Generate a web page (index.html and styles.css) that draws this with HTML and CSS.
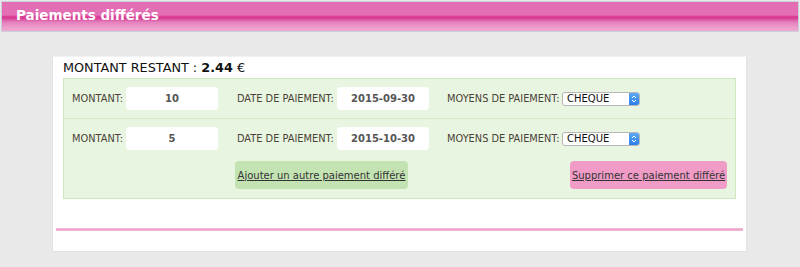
FILE: index.html
```html
<!DOCTYPE html>
<html lang="fr">
<head>
<meta charset="utf-8">
<title>Paiements différés</title>
<link rel="stylesheet" href="styles.css">
</head>
<body>
<div class="header"><h1 class="title">Paiements différés</h1></div>
<div class="panel">
  <div class="remaining">MONTANT RESTANT : <b>2.44</b> €</div>
  <div class="box">
    <div class="row">
      <span class="lbl l1">MONTANT:</span><span class="field">10</span>
      <span class="lbl l2">DATE DE PAIEMENT:</span><span class="field">2015-09-30</span>
      <span class="lbl l3">MOYENS DE PAIEMENT:</span>
      <span class="select"><span class="sel-text">CHEQUE</span><span class="stepper"><svg width="6" height="10" viewBox="0 0 6 10"><path d="M1 4 L3 2 L5 4 M1 6 L3 8 L5 6" fill="none" stroke="#fff" stroke-width="1"/></svg></span></span>
    </div>
    <div class="row row2">
      <span class="lbl l1">MONTANT:</span><span class="field">5</span>
      <span class="lbl l2">DATE DE PAIEMENT:</span><span class="field">2015-10-30</span>
      <span class="lbl l3">MOYENS DE PAIEMENT:</span>
      <span class="select"><span class="sel-text">CHEQUE</span><span class="stepper"><svg width="6" height="10" viewBox="0 0 6 10"><path d="M1 4 L3 2 L5 4 M1 6 L3 8 L5 6" fill="none" stroke="#fff" stroke-width="1"/></svg></span></span>
    </div>
    <div class="actions">
      <a class="btn btn-add" href="#">Ajouter un autre paiement différé</a>
      <a class="btn btn-del" href="#">Supprimer ce paiement différé</a>
    </div>
  </div>
  <div class="rule"></div>
</div>
</body>
</html>
```
FILE: styles.css
```css
html, body { margin: 0; padding: 0; }
body {
  background: #e9e9e9;
  font-family: "DejaVu Sans", Verdana, sans-serif;
  width: 800px;
  height: 267px;
  overflow: hidden;
  padding-top: 1px;
  box-sizing: border-box;
}
.header {
  margin: 0 1px;
  height: 29px;
  border: 1px solid #c9cfdc;
  background: linear-gradient(to bottom, #e26db2 0px, #e36fb4 13px, #d7348f 15px, #d94a9c 17px, #e57fbd 20px, #ee9fcd 26px, #f0a8d1 29px);
  display: flex;
  align-items: flex-start;
}
.title {
  margin: 0;
  padding: 4px 0 0 14px;
  color: #fff;
  font-size: 13.5px;
  font-weight: bold;
  line-height: 18px;
}
.panel {
  margin: 24px 0 0 52px;
  width: 695px;
  height: 196px;
  box-sizing: border-box;
  background: #fff;
  border: 1px solid #e3e3e3;
  border-top-color: #f2f2f2;
  padding: 0 10px;
}
.remaining {
  font-size: 12.8px;
  color: #111;
  height: 21px;
  line-height: 22px;
}
.remaining b { font-weight: bold; }
.box {
  background: #e8f5e0;
  border: 1px solid #cde8bf;
}
.row {
  display: flex;
  align-items: center;
  height: 39px;
  padding-left: 8px;
  border-bottom: 1px solid #d3ecc6;
}
.row2 { border-bottom: none; }
.lbl {
  font-size: 9.8px;
  color: #4a4238;
  white-space: nowrap;
}
.l1 { width: 54px; }
.l2 { width: 100px; margin-left: 19px; }
.l3 { width: 115px; margin-left: 18px; }
.field {
  width: 92px;
  height: 23px;
  background: #fff;
  border-radius: 4px;
  font-size: 10px;
  font-weight: bold;
  color: #555;
  display: flex;
  align-items: center;
  justify-content: center;
}
.select {
  width: 78px;
  height: 14px;
  box-sizing: border-box;
  border: 1px solid #b7b7b7;
  border-radius: 3px;
  background: #fff;
  display: flex;
  overflow: hidden;
}
.sel-text {
  flex: 1;
  font-size: 10px;
  color: #111;
  line-height: 12px;
  padding-left: 4px;
}
.stepper {
  width: 10px;
  background: linear-gradient(to bottom, #5fa8f4, #2a7fe8);
  display: flex;
  align-items: center;
  justify-content: center;
}
.actions {
  display: flex;
  align-items: center;
  padding: 3px 8px 9px 171px;
}
.btn {
  height: 28px;
  box-sizing: border-box;
  border-radius: 4px;
  font-size: 10px;
  color: #333;
  text-decoration: underline;
  display: flex;
  align-items: center;
  justify-content: center;
}
.btn-add { width: 173px; background: #c4e3b3; }
.btn-del { width: 157px; background: #f09cc6; margin-left: auto; }
.rule {
  margin: 29px -7px 0;
  height: 3px;
  background: linear-gradient(to bottom, #f6c3de, #ec9cc6 66%, #f7d0e4);
}
```
